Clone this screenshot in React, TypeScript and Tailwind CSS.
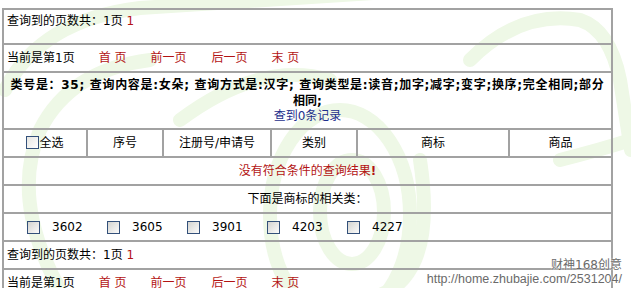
import React from "react";

const Box = ({ shade = true }: { shade?: boolean }) => (
  <span
    className={
      "inline-block w-[13px] h-[13px] border border-[#33507a] shrink-0 " +
      (shade
        ? "bg-gradient-to-br from-[#d4d4d0] to-[#fbfbfb]"
        : "bg-gradient-to-br from-[#e6e6e2] to-white")
    }
  />
);

const Pager = () => (
  <div className="flex items-center h-full pl-[3px]">
    <span>当前是第1页</span>
    <a className="ml-[24px] text-[#b31414] whitespace-pre">首 页</a>
    <a className="ml-[24px] text-[#b31414]">前一页</a>
    <a className="ml-[25px] text-[#b31414]">后一页</a>
    <a className="ml-[24px] text-[#b31414] whitespace-pre">末 页</a>
  </div>
);

const Watermark = () => (
  <svg
    className="absolute inset-0 pointer-events-none"
    width="631"
    height="288"
    viewBox="0 0 631 288"
    fill="none"
  >
    <g stroke="#eef8e6" strokeWidth="14" strokeLinecap="round">
      <path d="M5 90 Q 40 20 140 8 L 420 -10" />
      <path d="M60 290 Q 10 200 40 130 Q 70 70 150 60" />
      <ellipse cx="340" cy="215" rx="70" ry="105" />
      <ellipse cx="352" cy="212" rx="32" ry="52" />
      <path d="M420 160 Q 440 290 360 300" />
      <path d="M470 60 Q 520 10 580 20 Q 610 30 620 80 L 631 150" />
      <path d="M560 160 Q 600 150 631 140" />
      <path d="M180 120 Q 260 60 330 80" />
    </g>
  </svg>
);

export default function App() {
  const cols = [
    { w: "w-[82px]", b: false, label: "全选", box: true },
    { w: "w-[76px]", b: true, label: "序号" },
    { w: "w-[108px]", b: true, label: "注册号/申请号" },
    { w: "w-[86px]", b: true, label: "类别" },
    { w: "w-[152px]", b: true, label: "商标" },
    { w: "flex-1", b: true, label: "商品" },
  ];
  const nums = ["3602", "3605", "3901", "4203", "4227"];
  const row = "border-t-2 border-[#a2a2a2]";
  return (
    <div className="relative w-[631px] h-[288px] overflow-hidden bg-white text-[12px] leading-[16px] text-black font-['DejaVu_Sans','Noto_Sans_CJK_SC',sans-serif]">
      <Watermark />
      <div className="relative pt-[8px] pl-[2px]">
        <div className="w-[611px] border-x-2 border-[#a2a2a2]">
          <div className={`${row} h-[35px] pt-[3px] pl-[3px]`}>
            查询到的页数共：1页 <span className="text-[#b31414]">1</span>
          </div>
          <div className={`${row} h-[28px]`}>
            <Pager />
          </div>
          <div
            className={`${row} h-[57px] pt-[5px] text-center leading-[15.5px]`}
          >
            <div className="font-bold whitespace-nowrap tracking-[0.7px]">
              类号是：35; 查询内容是:女朵; 查询方式是:汉字; 查询类型是:读音;加字;减字;变字;换序;完全相同;部分
            </div>
            <div className="font-bold">相同;</div>
            <div>
              <a className="text-[#1d2f8c]">查到0条记录</a>
            </div>
          </div>
          <div className={`${row} h-[28px] flex`}>
            {cols.map((c) => (
              <div
                key={c.label}
                className={`${c.w} h-full flex items-center justify-center ${
                  c.b ? "border-l-2 border-[#a2a2a2]" : ""
                }`}
              >
                {c.box ? (
                  <span className="flex items-center">
                    <span className="-mt-[2px] flex">
                      <Box shade={false} />
                    </span>
                    <span>{c.label}</span>
                  </span>
                ) : (
                  c.label
                )}
              </div>
            ))}
          </div>
          <div
            className={`${row} h-[28px] flex items-center justify-center text-[#b31414]`}
          >
            没有符合条件的查询结果<b>!</b>
          </div>
          <div className={`${row} h-[28px] flex items-center justify-center`}>
            下面是商标的相关类：
          </div>
          <div className={`${row} h-[28px] flex items-center pl-[23px]`}>
            {nums.map((n) => (
              <div key={n} className="w-[80px] flex items-center">
                <Box />
                <span className="ml-[12px]">{n}</span>
              </div>
            ))}
          </div>
          <div className={`${row} h-[28px] flex items-center pl-[3px]`}>
            <span>
              查询到的页数共：1页 <span className="text-[#b31414]">1</span>
            </span>
          </div>
          <div className={`${row} h-[28px]`}>
            <Pager />
          </div>
        </div>
      </div>
      <div className="absolute right-[9px] top-[258px] text-right text-[#6a6a6a] [text-shadow:0_0_2px_#fff,0_0_1px_#fff]">
        <div className="text-[12px] leading-[14px]">财神168创意</div>
        <div className="text-[12.5px] leading-[14px] font-['Liberation_Sans',sans-serif]">
          http://home.zhubajie.com/2531204/
        </div>
      </div>
    </div>
  );
}
